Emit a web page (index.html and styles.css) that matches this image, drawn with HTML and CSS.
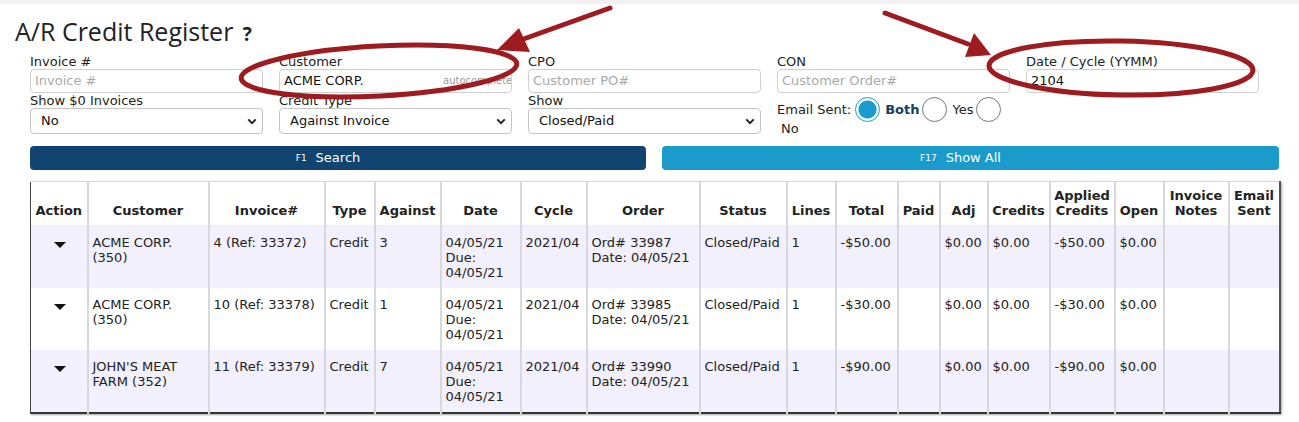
FILE: index.html
```html
<!DOCTYPE html>
<html>
<head>
<meta charset="utf-8">
<link rel="stylesheet" href="styles.css">
</head>
<body>
<div class="topstrip"></div>
<div class="page">
  <h1 class="title">A/R Credit Register <span class="help">?</span></h1>
  <div class="filters">
    <div class="field">
      <label>Invoice #</label>
      <div class="input placeholder">Invoice #</div>
    </div>
    <div class="field">
      <label>Customer</label>
      <div class="input">ACME CORP.<span class="auto">autocomplete</span></div>
    </div>
    <div class="field">
      <label>CPO</label>
      <div class="input placeholder">Customer PO#</div>
    </div>
    <div class="field">
      <label>CON</label>
      <div class="input placeholder">Customer Order#</div>
    </div>
    <div class="field">
      <label>Date / Cycle (YYMM)</label>
      <div class="input">2104</div>
    </div>
    <div class="field">
      <label>Show $0 Invoices</label>
      <div class="select">No<svg class="chev" viewBox="0 0 12 8"><path d="M1.5 1.5 L6 6 L10.5 1.5" fill="none" stroke="#222" stroke-width="2.4"/></svg></div>
    </div>
    <div class="field">
      <label>Credit Type</label>
      <div class="select">Against Invoice<svg class="chev" viewBox="0 0 12 8"><path d="M1.5 1.5 L6 6 L10.5 1.5" fill="none" stroke="#222" stroke-width="2.4"/></svg></div>
    </div>
    <div class="field">
      <label>Show</label>
      <div class="select">Closed/Paid<svg class="chev" viewBox="0 0 12 8"><path d="M1.5 1.5 L6 6 L10.5 1.5" fill="none" stroke="#222" stroke-width="2.4"/></svg></div>
    </div>
    <div class="field email">
      <span class="elabel">Email Sent:</span><span class="radio on"></span><span class="rtext bold">Both</span><span class="radio"></span><span class="rtext">Yes</span><span class="radio"></span><span class="rtext no">No</span>
    </div>
  </div>
  <div class="buttons">
    <div class="btn search"><span class="key">F1</span>Search</div>
    <div class="btn showall"><span class="key">F17</span>Show All</div>
  </div>
  <table class="grid">
    <colgroup>
      <col style="width:57px"><col style="width:121px"><col style="width:116px"><col style="width:50px"><col style="width:66px"><col style="width:80px"><col style="width:66px"><col style="width:113px"><col style="width:87px"><col style="width:49px"><col style="width:62px"><col style="width:42px"><col style="width:48px"><col style="width:62px"><col style="width:65px"><col style="width:49px"><col style="width:65px"><col style="width:51px">
    </colgroup>
    <thead>
      <tr>
        <th>Action</th><th>Customer</th><th>Invoice#</th><th>Type</th><th>Against</th><th>Date</th><th>Cycle</th><th>Order</th><th>Status</th><th>Lines</th><th>Total</th><th>Paid</th><th>Adj</th><th>Credits</th><th>Applied Credits</th><th>Open</th><th>Invoice Notes</th><th>Email Sent</th>
      </tr>
    </thead>
    <tbody>
      <tr class="alt">
        <td class="act"><span class="caret"></span></td><td>ACME CORP. (350)</td><td>4 (Ref: 33372)</td><td>Credit</td><td>3</td><td>04/05/21<br>Due:<br>04/05/21</td><td>2021/04</td><td>Ord# 33987<br>Date: 04/05/21</td><td>Closed/Paid</td><td>1</td><td>-$50.00</td><td></td><td>$0.00</td><td>$0.00</td><td>-$50.00</td><td>$0.00</td><td></td><td></td>
      </tr>
      <tr>
        <td class="act"><span class="caret"></span></td><td>ACME CORP. (350)</td><td>10 (Ref: 33378)</td><td>Credit</td><td>1</td><td>04/05/21<br>Due:<br>04/05/21</td><td>2021/04</td><td>Ord# 33985<br>Date: 04/05/21</td><td>Closed/Paid</td><td>1</td><td>-$30.00</td><td></td><td>$0.00</td><td>$0.00</td><td>-$30.00</td><td>$0.00</td><td></td><td></td>
      </tr>
      <tr class="alt">
        <td class="act"><span class="caret"></span></td><td>JOHN'S MEAT FARM (352)</td><td>11 (Ref: 33379)</td><td>Credit</td><td>7</td><td>04/05/21<br>Due:<br>04/05/21</td><td>2021/04</td><td>Ord# 33990<br>Date: 04/05/21</td><td>Closed/Paid</td><td>1</td><td>-$90.00</td><td></td><td>$0.00</td><td>$0.00</td><td>-$90.00</td><td>$0.00</td><td></td><td></td>
      </tr>
    </tbody>
  </table>
</div>
<svg class="annot" width="1299" height="422" viewBox="0 0 1299 422">
  <g fill="none" stroke="#9e1b20" stroke-width="5">
    <ellipse cx="379" cy="71" rx="138" ry="25" transform="rotate(-3 379 71)"/>
    <ellipse cx="1121" cy="68" rx="132" ry="27" transform="rotate(1 1121 68)"/>
    <line x1="610" y1="8" x2="518" y2="41" stroke-linecap="round"/>
    <line x1="885" y1="13" x2="968" y2="44" stroke-linecap="round"/>
  </g>
  <g fill="#9e1b20">
    <polygon points="497,50 519,28 530,52"/>
    <polygon points="991,55 965,57 974,33"/>
  </g>
</svg>
</body>
</html>
```
FILE: styles.css
```css
html, body {
  margin: 0;
  padding: 0;
  background: #ffffff;
}
body {
  font-family: "DejaVu Sans", Verdana, sans-serif;
  font-size: 13px;
  color: #222;
  width: 1299px;
  height: 422px;
  overflow: hidden;
  position: relative;
}
.topstrip {
  height: 4px;
  background: #f1f1f1;
}
.page {
  padding: 0 0 0 30px;
}
.title {
  font-family: "Open Sans", "Liberation Sans", sans-serif;
  font-weight: 400;
  font-size: 25px;
  line-height: 30px;
  margin: 12px 0 0 -15px;
  color: #222;
}
.help {
  font-weight: 700;
  font-size: 19px;
  margin-left: 3px;
}
.filters {
  display: grid;
  grid-template-columns: repeat(5, 233px);
  column-gap: 16px;
  margin-top: 5px;
}
.field label {
  display: block;
  line-height: 15px;
  height: 15px;
  color: #222;
}
.input {
  height: 22px;
  border: 1px solid #cfcfcf;
  border-radius: 4px;
  line-height: 22px;
  padding: 0 4px;
  position: relative;
  color: #111;
  overflow: hidden;
  white-space: nowrap;
}
.input.placeholder {
  color: #a9a9a9;
}
.auto {
  position: absolute;
  left: 163px;
  top: 0;
  font-size: 10px;
  color: #9a9a9a;
}
.select {
  height: 24px;
  border: 1px solid #c4c4c4;
  border-radius: 4px;
  line-height: 24px;
  padding: 0 5px 0 10px;
  display: flex;
  justify-content: space-between;
  align-items: center;
  color: #111;
}
.chev {
  width: 10px;
  height: 7px;
}
.email {
  display: block;
  line-height: 14px;
  margin-top: 4px;
  margin-bottom: -6px;
  font-size: 13px;
}
.email > span {
  vertical-align: middle;
}
.elabel {
  margin-right: 4px;
}
.radio {
  display: inline-block;
  width: 23px;
  height: 23px;
  border: 1px solid #777;
  border-radius: 50%;
  box-sizing: content-box;
  margin: 0 5px 0 0;
}
.radio.on {
  border: 1px solid #1a9bd0;
  background: radial-gradient(circle, #1a9bd0 0 8.5px, #ffffff 9.5px);
}
.rtext {
  margin-right: 3px;
}
.rtext.bold {
  font-weight: 700;
  color: #183d62;
}
.rtext.no {
  display: inline-block;
  margin-left: 4px;
  margin-top: -1px;
}
.buttons {
  display: grid;
  grid-template-columns: 616px 617px;
  column-gap: 16px;
  margin-top: 12px;
}
.btn {
  height: 24px;
  border-radius: 4px;
  color: #fff;
  font-weight: 400;
  line-height: 24px;
  text-align: center;
  font-size: 13px;
  padding-right: 20px;
}
.btn .key {
  font-size: 9px;
  margin-right: 9px;
  vertical-align: 1px;
}
.search {
  background: #124471;
}
.showall {
  background: #1a9bcb;
}
.grid {
  margin-top: 11px;
  border-collapse: collapse;
  table-layout: fixed;
  width: 1250px;
  border-top: 1px solid #d9d9d9;
  border-left: 1px solid #444;
  border-right: 2px solid #555;
  border-bottom: 2px solid #333;
  box-shadow: 1px 1px 2px rgba(0,0,0,0.35);
}
.grid th {
  font-weight: 700;
  text-align: center;
  vertical-align: bottom;
  height: 36px;
  padding: 0 2px 7px 2px;
  line-height: 15px;
  color: #222;
  border-left: 2px solid #d7d7de;
  border-bottom: 1px dotted #e2e2e2;
}
.grid td {
  vertical-align: top;
  padding: 9px 4px 0 4px;
  height: 53px;
  line-height: 15px;
  color: #222;
  border-left: 2px solid #d7d7de;
}
.grid th:first-child, .grid td:first-child {
  border-left: none;
}
.grid tr.alt td {
  background: #f1f0fc;
}
.grid td.act {
  text-align: center;
}
.caret {
  display: inline-block;
  width: 0;
  height: 0;
  border-left: 6px solid transparent;
  border-right: 6px solid transparent;
  border-top: 6px solid #111;
  margin-top: 7px;
  margin-left: 2px;
}
.annot {
  position: absolute;
  left: 0;
  top: 0;
  pointer-events: none;
}
```
